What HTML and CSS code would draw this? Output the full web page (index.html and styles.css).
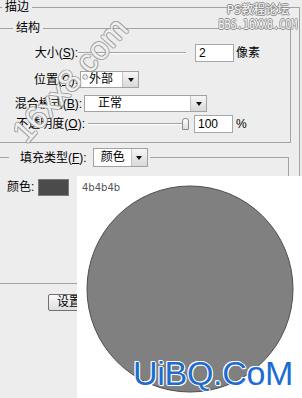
FILE: index.html
```html
<!DOCTYPE html>
<html lang="zh-CN">
<head>
<meta charset="utf-8">
<title>描边</title>
<link rel="stylesheet" href="styles.css">
</head>
<body>
<div class="dialog">
  <fieldset class="group outer">
    <legend class="legend">描边</legend>
    <fieldset class="group struct">
      <legend class="legend">结构</legend>
      <div class="row row-a">
        <span class="lbl lbl-size">大小(<u>S</u>):</span>
        <span class="slider slider-size"></span>
        <span class="field field-size">2</span>
        <span class="unit">像素</span>
      </div>
      <div class="row row-b">
        <span class="lbl lbl-pos">位置(<u>C</u>):</span>
        <span class="select sel-pos"><span class="val">外部</span><span class="drop"></span></span>
      </div>
      <div class="row row-c">
        <span class="lbl lbl-mode">混合模式(<u>B</u>):</span>
        <span class="select sel-mode"><span class="val">正常</span><span class="drop"></span></span>
      </div>
      <div class="row row-d">
        <span class="lbl lbl-op">不透明度(<u>O</u>):</span>
        <span class="slider slider-op"></span>
        <span class="thumb"></span>
        <span class="field field-op">100</span>
        <span class="unit unit-pct">%</span>
      </div>
    </fieldset>
    <fieldset class="group fill">
      <legend class="legend fill-legend">
        <span class="lbl-fill">填充类型(<u>F</u>):</span>
        <span class="select sel-fill"><span class="val">颜色</span><span class="drop"></span></span>
      </legend>
      <div class="color-row">
        <span class="lbl-color">颜色:</span>
        <span class="swatch"></span>
      </div>
    </fieldset>
    <div class="btn-row"><span class="button">设置...</span></div>
  </fieldset>
</div>

<div class="preview">
  <svg class="canvas" width="225" height="222" viewBox="0 0 225 222">
    <circle cx="113" cy="113" r="103" fill="#808080" stroke="#4e4e4e" stroke-width="1"/>
  </svg>
  <div class="hex">4b4b4b</div>
</div>

<div class="wm-top">
  <div class="wm-l1">PS教程论坛</div>
  <div class="wm-l2">BBS.16XX8.COM</div>
</div>
<div class="wm-diag">16xx8.com</div>
<div class="wm-brand">UiBQ.CoM</div>
</body>
</html>
```

FILE: styles.css
```css
html, body {
  margin: 0;
  padding: 0;
}
body {
  width: 302px;
  height: 398px;
  overflow: hidden;
  position: relative;
  background: #ededed;
  color: #000;
  font-family: "Liberation Sans", "Noto Sans CJK SC", sans-serif;
  font-size: 12px;
  line-height: 14px;
}
u { text-decoration: underline; text-underline-offset: 1px; }

.group {
  min-width: 0;
  box-sizing: border-box;
  border: 1px solid #a3a3a3;
  margin: 0;
}
.legend {
  padding: 0 3px;
  line-height: 14px;
  height: 14px;
}

.outer {
  margin-left: -4px;
  width: 304px;
  height: 398px;
  border-bottom: 0;
  padding: 7px 8px 0 5px;
}
.struct {
  margin: 0 0 0 -6px;
  padding: 9px 0 9px 16px;
}

.row {
  display: flex;
  align-items: center;
}
.row-a { height: 18px; margin-bottom: 9px; }
.row-b { height: 17px; margin-bottom: 7px; }
.row-c { height: 17px; margin-bottom: 3px; }
.row-d { height: 18px; }

.lbl {
  flex: none;
  text-align: right;
  white-space: nowrap;
}
.lbl-size { width: 65px; }
.lbl-pos { width: 65px; }
.lbl-mode { width: 69px; }
.lbl-op { width: 72px; }

.slider {
  flex: none;
  height: 0;
  border-top: 1px solid #a2a2a2;
  border-bottom: 1px solid #ffffff;
}
.slider-size { width: 108px; }
.slider-op { width: 95px; margin-left: 3px; }
.thumb {
  flex: none;
  box-sizing: border-box;
  width: 7px;
  height: 12px;
  margin-left: -1px;
  border: 1px solid #8a8a8a;
  border-radius: 3px 3px 1px 1px;
  background: linear-gradient(#ffffff, #dcdcdc);
}

.field {
  flex: none;
  box-sizing: border-box;
  width: 39px;
  height: 18px;
  background: #fff;
  border: 1px solid #a5a9ae;
  padding-left: 3px;
  line-height: 16px;
  font-size: 12px;
}
.field-size { margin-left: 9px; }
.field-op { margin-left: 5px; }
.unit { margin-left: 2px; }
.unit-pct { margin-left: 3px; }

.select {
  flex: none;
  box-sizing: border-box;
  display: flex;
  align-items: stretch;
  background: #fff;
  border: 1px solid #a2a2a2;
}
.select .val {
  flex: 1;
  line-height: 15px;
}
.select .drop {
  flex: none;
  width: 15px;
  border-left: 1px solid #c2c2c2;
  background: linear-gradient(#f6f6f6, #d9d9d9);
  display: flex;
  align-items: center;
  justify-content: center;
}
.select .drop::after {
  content: "";
  width: 0;
  height: 0;
  border-left: 3px solid transparent;
  border-right: 3px solid transparent;
  border-top: 4px solid #111;
}
.sel-pos { width: 59px; height: 17px; margin-left: 2px; }
.sel-pos .val { padding-left: 8px; }
.sel-mode { width: 123px; height: 17px; margin-left: 2px; }
.sel-mode .val { padding-left: 13px; }
.sel-fill { width: 55px; height: 19px; margin-left: 6px; }
.sel-fill .val { padding-left: 7px; line-height: 17px; }

.fill {
  margin: 5px 2px 0 -6px;
  padding: 11px 0 87px 10px;
}
.fill-legend {
  display: flex;
  align-items: center;
  height: 19px;
  margin-left: 2px;
  padding: 0 2px 0 11px;
}
.lbl-fill { white-space: nowrap; }

.color-row {
  display: flex;
  align-items: center;
  height: 18px;
}
.swatch {
  box-sizing: border-box;
  width: 31px;
  height: 17px;
  margin-left: 4px;
  background: #4b4b4b;
  border: 1px solid #7a7a7a;
}

.btn-row {
  margin-top: 10px;
  padding-left: 46px;
}
.button {
  display: inline-block;
  box-sizing: border-box;
  height: 17px;
  padding: 0 8px 0 8px;
  line-height: 15px;
  border: 1px solid #707070;
  border-radius: 2px;
  background: linear-gradient(#fafafa, #dedede);
}

.preview {
  position: absolute;
  left: 77px;
  top: 176px;
  right: 0;
  bottom: 0;
  background: #ffffff;
  padding: 6px 0 0 5px;
}
.canvas {
  position: absolute;
  left: 0;
  top: 0;
}
.hex {
  position: relative;
  font-family: "DejaVu Sans", sans-serif;
  font-size: 10px;
  line-height: 12px;
  color: #555;
}

.wm-top {
  position: absolute;
  left: 208px;
  top: 3px;
  width: 100px;
  text-align: center;
  color: #f6f6f6;
  text-shadow: 1px 0 #8a8a8a, -1px 0 #8a8a8a, 0 1px #8a8a8a, 0 -1px #8a8a8a;
}
.wm-l1 {
  font-family: "DejaVu Sans Mono", "Noto Sans CJK SC", monospace;
  font-size: 12px;
  line-height: 14px;
}
.wm-l2 {
  font-family: "DejaVu Sans Mono", monospace;
  font-size: 14px;
  line-height: 14px;
  transform: scaleX(0.72);
  white-space: nowrap;
  margin-left: -20px;
  margin-right: -20px;
}

.wm-diag {
  position: absolute;
  left: 70px;
  top: 80px;
  transform: translate(-50%, -50%) rotate(-48deg);
  white-space: nowrap;
  font-family: "Liberation Sans", sans-serif;
  font-size: 32px;
  line-height: 32px;
  color: rgba(255, 255, 255, 0.85);
  text-shadow: 1px 0 #9a9a9a, -1px 0 #9a9a9a, 0 1px #9a9a9a, 0 -1px #9a9a9a;
}

.wm-brand {
  position: absolute;
  left: 133px;
  top: 356px;
  font-family: "Liberation Sans", sans-serif;
  font-size: 34px;
  line-height: 34px;
  letter-spacing: -0.3px;
  color: #1c6dd2;
  white-space: nowrap;
  text-shadow: 1px 0 #fff, -1px 0 #fff, 0 1px #fff, 0 -1px #fff, 1px 1px #fff, -1px -1px #fff;
}
```
